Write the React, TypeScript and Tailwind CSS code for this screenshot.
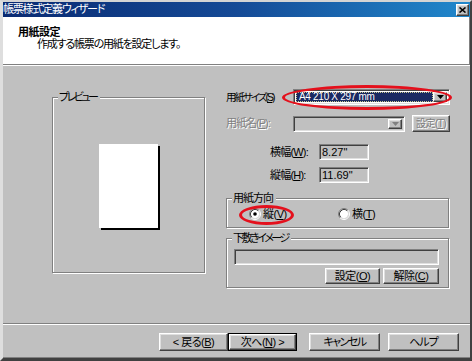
import React from "react";

const F = "font-['Liberation_Sans','Noto_Sans_CJK_JP',sans-serif] [font-feature-settings:'palt']";
const SUNKEN =
  "border border-t-[#808080] border-l-[#808080] border-r-white border-b-white shadow-[inset_1px_1px_0_#404040,inset_-1px_-1px_0_#dfdfdf]";
const RAISED =
  "bg-[#c0c0c0] border border-t-white border-l-white border-r-[#404040] border-b-[#404040] shadow-[inset_-1px_-1px_0_#808080,inset_1px_1px_0_#dfdfdf]";
const DIS = "text-[#808080] [text-shadow:1px_1px_0_#fff]";

function Btn({ className = "", disabled = false, children }: { className?: string; disabled?: boolean; children: React.ReactNode }) {
  return (
    <div className={`flex items-center justify-center whitespace-nowrap leading-none ${RAISED} ${disabled ? DIS : "text-black"} ${className}`}>
      {children}
    </div>
  );
}

function Arrow({ color = "#000" }: { color?: string }) {
  return (
    <svg width="7" height="4" viewBox="0 0 7 4">
      <polygon points="0,0 7,0 3.5,4" fill={color} />
    </svg>
  );
}

function Radio({ checked }: { checked: boolean }) {
  return (
    <svg width="12" height="12" viewBox="0 0 12 12" className="shrink-0">
      <circle cx="6" cy="6" r="4.2" fill="#fff" />
      <path d="M2.11 9.89 A5.5 5.5 0 0 1 9.89 2.11" stroke="#808080" fill="none" />
      <path d="M9.89 2.11 A5.5 5.5 0 0 1 2.11 9.89" stroke="#ffffff" fill="none" />
      <path d="M2.82 9.18 A4.5 4.5 0 0 1 9.18 2.82" stroke="#404040" fill="none" />
      <path d="M9.18 2.82 A4.5 4.5 0 0 1 2.82 9.18" stroke="#dfdfdf" fill="none" />
      {checked && <circle cx="6" cy="6" r="1.8" fill="#000" />}
    </svg>
  );
}

function Group({ label, labelClass = "", className = "", children }: { label: string; labelClass?: string; className?: string; children?: React.ReactNode }) {
  return (
    <div className={`relative border border-[#808080] shadow-[inset_1px_1px_0_#fff,1px_1px_0_#fff] ${className}`}>
      <span className={`absolute -top-[7px] left-[5px] bg-[#c0c0c0] pl-[1px] pr-[3px] text-[11px] leading-[13px] text-black whitespace-nowrap ${labelClass}`}>
        {label}
      </span>
      {children}
    </div>
  );
}

export default function App() {
  return (
    <div className={`relative w-[472px] h-[361px] overflow-hidden ${F}`}>
      <div className="flex flex-col w-full h-full bg-[#c0c0c0] border-t-2 border-t-[#d4d4d4] border-l-[3px] border-l-[#dedede] border-r-2 border-r-[#404040] border-b-[3px] border-b-[#404040]">
        {/* title bar */}
        <div className="flex items-center justify-between h-[15px] bg-linear-to-r from-[#0a2a72] via-[#154a96] to-[#2188cc] pr-[1px]">
          <span className="text-white text-[11px] leading-none tracking-[-1.2px]">帳票様式定義ウィザード</span>
          <div className={`flex items-center justify-center w-[13px] h-[12px] ${RAISED}`}>
            <svg width="7" height="6" viewBox="0 0 7 6">
              <path d="M0.5 0.5 L6.5 5.5 M6.5 0.5 L0.5 5.5" stroke="#000" strokeWidth="1.6" />
            </svg>
          </div>
        </div>
        {/* header */}
        <div className="h-[47px] bg-white pt-[9px] border-r border-r-[#808080]">
          <div className="pl-[15px] text-[11px] leading-[12px] font-bold text-black tracking-[-0.5px]">用紙設定</div>
          <div className="pl-[34px] text-[11px] leading-[12px] text-black tracking-[-1.2px]">作成する帳票の用紙を設定します。</div>
        </div>
        <div className="h-px bg-[#808080]" />
        <div className="h-px bg-white" />
        {/* body */}
        <div className="flex h-[257px] text-[11px] leading-none text-black tracking-[-0.5px]">
          <div className="pl-[49px] pt-[31px]">
            <Group label="プレビュー" labelClass="tracking-[-2.5px]" className="w-[153px] h-[176px] flex items-center justify-center">
              <div className="w-[59px] h-[84px] bg-white shadow-[2px_2px_0_#000] mt-[2px]" />
            </Group>
          </div>
          <div className="ml-[21px] pt-[23px] w-[224px] flex flex-col">
            {/* 用紙サイズ */}
            <div className="flex items-center h-[16px]">
              <span className="w-[67px] whitespace-nowrap text-[10.5px] tracking-[-2px]">
                用紙サイズ(<u>S</u>)
              </span>
              <div className={`flex w-[157px] h-[16px] bg-white p-[2px] ${SUNKEN}`}>
                <div className="flex-1 flex items-center bg-[#1a2a62] border border-dotted border-[#c8c890] text-white pl-[2px] text-[10px] tracking-[-0.3px]">
                  A4 210 X 297 mm
                </div>
                <div className={`flex items-center justify-center w-[14px] ${RAISED}`}>
                  <Arrow />
                </div>
              </div>
            </div>
            {/* 用紙名 */}
            <div className="flex items-center h-[17px] mt-[10px]">
              <span className={`w-[67px] whitespace-nowrap tracking-[-1px] ${DIS}`}>
                用紙名(<u>P</u>):
              </span>
              <div className={`flex justify-end w-[112px] h-[16px] bg-[#c0c0c0] p-[2px] ${SUNKEN}`}>
                <div className={`flex items-center justify-center w-[14px] ${RAISED}`}>
                  <Arrow color="#808080" />
                </div>
              </div>
              <Btn disabled className="ml-[7px] w-[38px] h-[17px] text-[10px] tracking-[-0.6px]">
                設定(<u>T</u>)
              </Btn>
            </div>
            {/* 横幅 */}
            <div className="flex items-center h-[16px] mt-[12px] pl-[44px]">
              <span className="w-[49px] whitespace-nowrap tracking-[-0.8px]">
                横幅(<u>W</u>):
              </span>
              <div className={`flex items-center w-[50px] h-[16px] pl-[2px] tracking-normal ${SUNKEN}`}>8.27&quot;</div>
            </div>
            {/* 縦幅 */}
            <div className="flex items-center h-[16px] mt-[7px] pl-[44px]">
              <span className="w-[49px] whitespace-nowrap tracking-[-0.8px]">
                縦幅(<u>H</u>):
              </span>
              <div className={`flex items-center w-[50px] h-[16px] pl-[2px] tracking-normal ${SUNKEN}`}>11.69&quot;</div>
            </div>
            {/* 用紙方向 */}
            <Group label="用紙方向" labelClass="tracking-[-1px]" className="mt-[15px] w-[223px] h-[30px]">
              <div className="flex items-center pl-[22px] pt-[9px]">
                <div className="flex items-center gap-[2px] w-[89px]">
                  <Radio checked />
                  <span>
                    縦(<u>V</u>)
                  </span>
                </div>
                <div className="flex items-center gap-[2px]">
                  <Radio checked={false} />
                  <span>
                    横(<u>T</u>)
                  </span>
                </div>
              </div>
            </Group>
            {/* 下敷きイメージ */}
            <Group label="下敷きイメージ" labelClass="tracking-[-2.5px]" className="mt-[10px] w-[223px] h-[50px]">
              <div className="pl-[7px] pt-[10px] flex flex-col">
                <div className={`w-[205px] h-[16px] ${SUNKEN}`} />
                <div className="flex justify-end gap-[3px] w-[205px] mt-[3px]">
                  <Btn className="w-[55px] h-[16px]">
                    設定(<u>O</u>)
                  </Btn>
                  <Btn className="w-[56px] h-[16px]">
                    解除(<u>C</u>)
                  </Btn>
                </div>
              </div>
            </Group>
          </div>
        </div>
        <div className="h-px bg-[#808080]" />
        <div className="h-px bg-white" />
        {/* buttons */}
        <div className="flex h-[33px] pt-[8px] pl-[156px] border-b border-b-[#808080] text-[11px] text-black tracking-[-0.5px]">
          <Btn className="w-[69px] h-[18px]">
            &lt; 戻る(<u>B</u>)
          </Btn>
          <div className="w-[69px] h-[18px] border border-black flex">
            <Btn className="flex-1">
              次へ(<u>N</u>) &gt;
            </Btn>
          </div>
          <Btn className="ml-[12px] w-[71px] h-[18px] tracking-[-1.5px]">キャンセル</Btn>
          <Btn className="ml-[8px] w-[71px] h-[18px] tracking-[-1px]">ヘルプ</Btn>
        </div>
      </div>
      {/* annotation ellipses */}
      <div className="absolute left-[282px] top-[85px] w-[170px] h-[25px] rounded-[50%] border-[3px] border-[#e4101c]" />
      <div className="absolute left-[239px] top-[205px] w-[55px] h-[20px] rounded-[50%] border-[3px] border-[#e4101c]" />
    </div>
  );
}
